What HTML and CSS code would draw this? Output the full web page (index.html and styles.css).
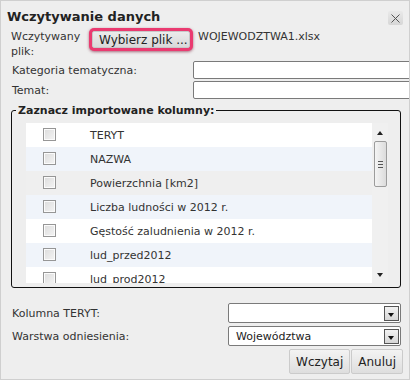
FILE: index.html
```html
<!DOCTYPE html>
<html>
    <head>
        <link rel="stylesheet" href="styles.css">
    </head>
    <body>
        <div class="dialog">
            <div class="title-bar">
                <span class="title">Wczytywanie danych</span>
                <span class="close">
                    <svg width="9" height="9" viewBox="0 0 9 9"><path d="M0.5 0.5 L8.5 8.5 M8.5 0.5 L0.5 8.5" stroke="#555" stroke-width="1"/></svg>
                </span>
            </div>

            <div class="file-row">
                <div class="file-label">Wczytywany plik:</div>
                <div class="pick-ring"><button class="pick">Wybierz plik ...</button></div>
                <div class="file-name">WOJEWODZTWA1.xlsx</div>
            </div>

            <div class="field">
                <label class="field-label">Kategoria tematyczna:</label>
                <div class="text-input"></div>
            </div>
            <div class="field">
                <label class="field-label">Temat:</label>
                <div class="text-input"></div>
            </div>

            <fieldset class="columns">
                <legend>Zaznacz importowane kolumny:</legend>
                <div class="list">
                    <div class="rows">
                        <div class="row"><span class="chk"></span><span class="name">TERYT</span></div>
                        <div class="row alt"><span class="chk"></span><span class="name">NAZWA</span></div>
                        <div class="row hover"><span class="chk"></span><span class="name">Powierzchnia [km2]</span></div>
                        <div class="row alt"><span class="chk"></span><span class="name">Liczba ludności w 2012 r.</span></div>
                        <div class="row"><span class="chk"></span><span class="name">Gęstość zaludnienia w 2012 r.</span></div>
                        <div class="row alt"><span class="chk"></span><span class="name">lud_przed2012</span></div>
                        <div class="row"><span class="chk"></span><span class="name">lud_prod2012</span></div>
                    </div>
                    <div class="scrollbar">
                        <span class="arrow-up"></span>
                        <span class="thumb"><span class="grip"></span></span>
                        <span class="track"></span>
                        <span class="arrow-down"></span>
                    </div>
                </div>
            </fieldset>

            <div class="field sel-field first">
                <label class="field-label">Kolumna TERYT:</label>
                <div class="select"><span class="sel-value"></span><span class="sel-btn"></span></div>
            </div>
            <div class="field sel-field">
                <label class="field-label">Warstwa odniesienia:</label>
                <div class="select"><span class="sel-value">Województwa</span><span class="sel-btn"></span></div>
            </div>

            <div class="buttons">
                <button class="btn">Wczytaj</button>
                <button class="btn">Anuluj</button>
            </div>
        </div>
    </body>
</html>
```

FILE: styles.css
```css
body {
    margin: 0;
    background: #eeeeee;
    font-family: "DejaVu Sans", Verdana, sans-serif;
    font-size: 11px;
    color: #333;
}
.dialog {
    width: 410px;
    height: 380px;
    box-sizing: border-box;
    border: 1px solid #cfcfcf;
    background: #eeeeee;
    overflow: hidden;
}
.title-bar {
    display: flex;
    justify-content: space-between;
    align-items: flex-start;
    padding: 7px 6px 0 6px;
    height: 20px;
}
.title {
    font-weight: bold;
    font-size: 13px;
    line-height: 18px;
    color: #222;
}
.close {
    display: flex;
    align-items: center;
    justify-content: center;
    width: 15px;
    height: 14px;
    margin-top: 3px;
    border-radius: 2px;
    background: linear-gradient(#e9e9e9, #d6d6d6);
}

.file-row {
    display: flex;
    align-items: flex-start;
    padding-left: 10px;
    height: 33px;
}
.file-label {
    width: 70px;
    flex-shrink: 0;
    line-height: 15px;
    margin-top: 1px;
    color: #333;
}
.pick-ring {
    margin-left: 8px;
    padding: 3px;
    border-radius: 5px;
    background: #ea3a70;
    box-shadow: 0 1px 3px rgba(120, 20, 50, 0.6);
}
.pick {
    display: block;
    font-family: inherit;
    font-size: 12px;
    color: #222;
    height: 17px;
    width: 98px;
    padding: 0 0 0 6px;
    text-align: left;
    border: 1px solid #c8c8c8;
    border-radius: 2px;
    background: linear-gradient(#ebebeb, #d9d9d9);
}
.file-name {
    margin-left: 5px;
    margin-top: 1px;
    line-height: 15px;
    color: #333;
}

.field {
    display: flex;
    align-items: center;
    padding-left: 11px;
    margin-bottom: 2px;
}
.field-label {
    width: 181px;
    flex-shrink: 0;
    color: #333;
}
.text-input {
    width: 240px;
    flex-shrink: 0;
    height: 18px;
    box-sizing: border-box;
    border: 1px solid #7a7a7a;
    border-radius: 2px;
    background: #fff;
}

.columns {
    margin: 5px 0 0 10px;
    padding: 0;
    width: 390px;
    box-sizing: border-box;
    border: 1px solid #111;
    border-radius: 3px;
}
.columns legend {
    margin-left: 4px;
    padding: 0 2px;
    font-weight: bold;
    line-height: 13px;
    color: #222;
}
.list {
    display: flex;
    height: 160px;
    margin: 6px 12px 4px 14px;
    overflow: hidden;
}
.rows {
    flex: 1;
    overflow: hidden;
}
.row {
    display: flex;
    align-items: center;
    height: 24px;
    padding-left: 17px;
    background: #fff;
}
.row.alt {
    background: #f0f4fa;
}
.row.hover {
    background: #efefef;
}
.chk {
    width: 13px;
    height: 13px;
    flex-shrink: 0;
    box-sizing: border-box;
    border: 1px solid #969696;
    box-shadow: inset 0 0 0 1px #fbfbfb;
    background: linear-gradient(135deg, #dcdcdc, #f4f4f4);
    margin-top: -2px;
}
.name {
    margin-left: 34px;
    color: #333;
    white-space: nowrap;
}

.scrollbar {
    display: flex;
    flex-direction: column;
    align-items: center;
    width: 16px;
    background: #f0f0f0;
}
.arrow-up, .arrow-down {
    width: 0;
    height: 0;
    border-left: 3.5px solid transparent;
    border-right: 3.5px solid transparent;
}
.arrow-up {
    margin-top: 8px;
    border-bottom: 4px solid #222;
}
.arrow-down {
    margin-bottom: 6px;
    border-top: 4px solid #222;
}
.thumb {
    display: flex;
    align-items: center;
    justify-content: center;
    margin-top: 6px;
    width: 13px;
    height: 46px;
    box-sizing: border-box;
    border: 1px solid #9c9c9c;
    border-radius: 2px;
    background: linear-gradient(90deg, #f4f4f4, #dcdcdc);
}
.grip {
    width: 5px;
    height: 7px;
    background: repeating-linear-gradient(#555 0 1px, transparent 1px 3px);
}
.track {
    flex: 1;
}

.sel-field {
    margin-bottom: 3px;
}
.sel-field.first {
    margin-top: 15px;
}
.sel-field .field-label {
    width: 216px;
}
.select {
    display: flex;
    align-items: center;
    width: 173px;
    height: 20px;
    box-sizing: border-box;
    border: 1px solid #7a7a7a;
    border-radius: 2px;
    background: #fff;
}
.sel-value {
    flex: 1;
    padding-left: 7px;
    color: #222;
}
.sel-btn {
    position: relative;
    width: 15px;
    height: 15px;
    margin-right: 1px;
    box-sizing: border-box;
    border: 1px solid #555;
    background: linear-gradient(#f2f2f2, #d6d6d6);
}
.sel-btn::after {
    content: "";
    position: absolute;
    left: 3px;
    top: 6px;
    border-left: 3.5px solid transparent;
    border-right: 3.5px solid transparent;
    border-top: 4px solid #111;
}

.buttons {
    display: flex;
    justify-content: flex-end;
    gap: 1px;
    margin: 1px 6px 0 0;
}
.btn {
    font-family: inherit;
    font-size: 12px;
    color: #222;
    height: 25px;
    padding: 0 6px;
    border: 1px solid #cbcbcb;
    border-radius: 2px;
    background: linear-gradient(#f3f3f3, #dedede);
}
```
